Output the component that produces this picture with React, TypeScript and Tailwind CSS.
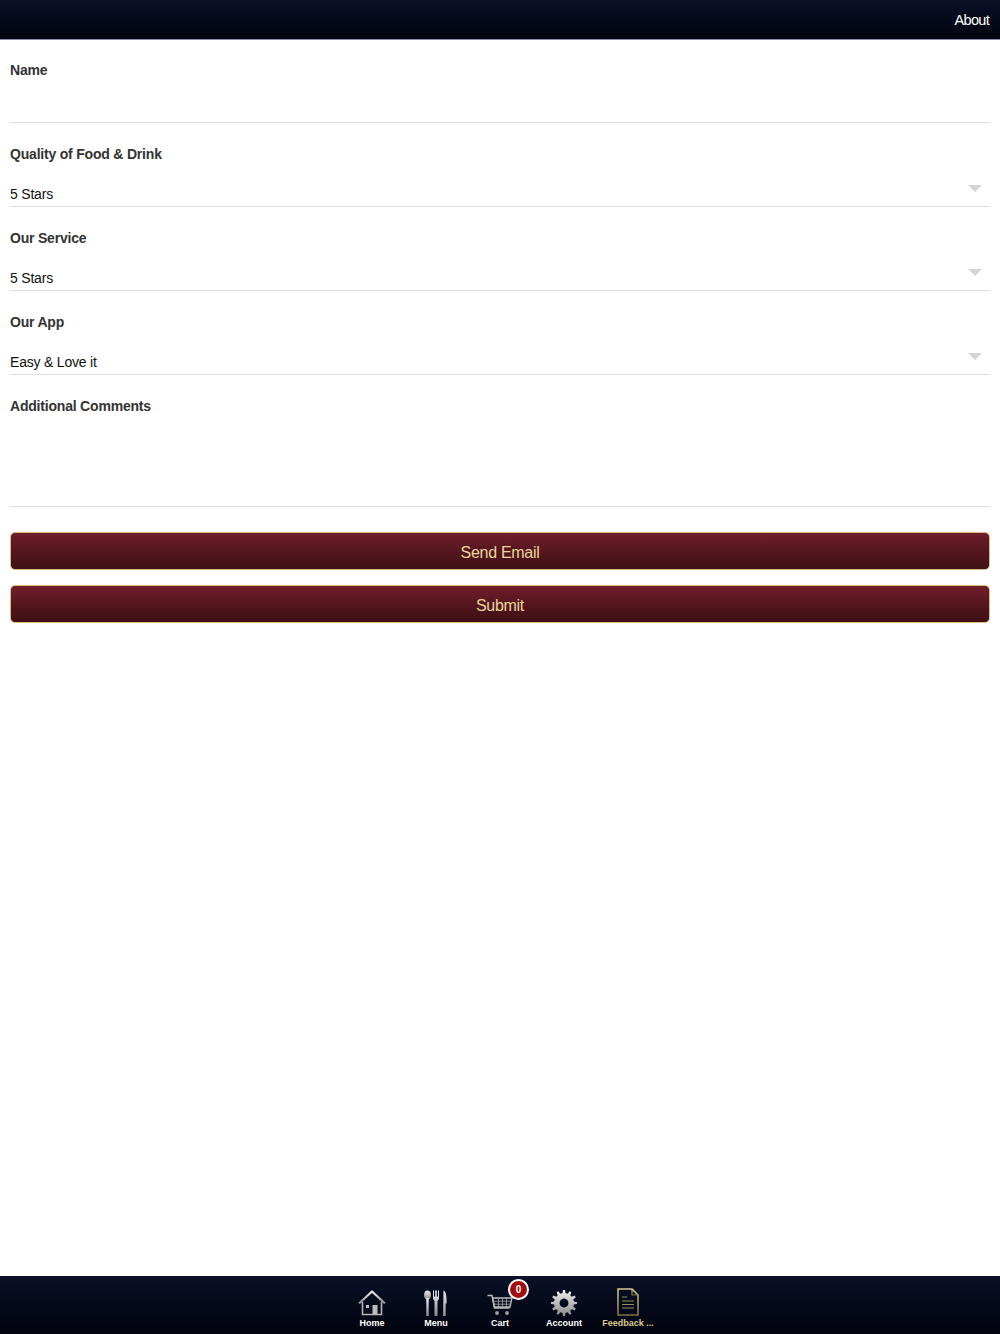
const fieldLabel = "text-[14px] leading-[18px] font-bold tracking-[-0.2px] text-[#333333]";

// tab icons share this grey fade
const IconDefs = () => (
  <svg width="0" height="0" className="absolute">
    <defs>
      <linearGradient id="tabGrey" x1="0" y1="0" x2="0" y2="1">
        <stop offset="0" stopColor="#eeeeee" />
        <stop offset="1" stopColor="#8a8a8a" />
      </linearGradient>
      <linearGradient id="tabGold" x1="0" y1="0" x2="0" y2="1">
        <stop offset="0" stopColor="#d9c78c" />
        <stop offset="1" stopColor="#7d6f45" />
      </linearGradient>
    </defs>
  </svg>
);

const HomeIcon = () => (
  <svg width="28" height="26" viewBox="0 0 28 26" fill="none">
    <path d="M1 13.5 14 1.5l13 12" stroke="url(#tabGrey)" strokeWidth="2.2" strokeLinejoin="round" />
    <path d="M4.5 12v12.5h19V12" stroke="#b5b5b5" strokeWidth="1.6" />
    <rect x="14.5" y="15" width="5" height="9.5" fill="#bcbcbc" />
    <rect x="8" y="15" width="3" height="3" fill="#bcbcbc" />
  </svg>
);

const MenuIcon = () => (
  <svg width="24" height="26" viewBox="0 0 24 26">
    <ellipse cx="3.5" cy="5" rx="3.4" ry="4.6" fill="url(#tabGrey)" />
    <rect x="2.3" y="8" width="2.4" height="18" fill="url(#tabGrey)" />
    <path d="M9 0.5h1v6h1.2v-6h1.6v6H14v-6h1V9l-1.5 2v15h-3V11L9 9z" fill="url(#tabGrey)" />
    <path d="M19.5 0.5c2.5 1 3.2 5 3.2 13h-1V26h-2.7z" fill="url(#tabGrey)" />
  </svg>
);

const CartIcon = () => (
  <svg width="26" height="22" viewBox="0 0 26 22" fill="none">
    <path d="M0.5 1.5h4.5l2.5 12.5h15" stroke="#bdbdbd" strokeWidth="1.4" />
    <path d="M5.5 4h19.5l-2 9H7.5z" stroke="#bdbdbd" strokeWidth="1.3" />
    <path d="M6.5 7.2h17.5M7 10.2h16.5M11.5 4.5V13.5M15.5 4.5V13.5M19.5 4.5V13.5" stroke="#a8a8a8" strokeWidth="0.8" />
    <circle cx="10" cy="19" r="1.9" fill="#a0a0a0" />
    <circle cx="20" cy="19" r="1.9" fill="#a0a0a0" />
  </svg>
);

const gearPath = () => {
  const teeth = 12;
  const pts: string[] = [];
  for (let i = 0; i < teeth; i++) {
    const a = (i / teeth) * Math.PI * 2;
    const step = (Math.PI * 2) / teeth;
    const corners: [number, number][] = [
      [a - step * 0.28, 10],
      [a - step * 0.16, 13],
      [a + step * 0.16, 13],
      [a + step * 0.28, 10],
    ];
    corners.forEach(([t, r]) => {
      pts.push(`${(13 + r * Math.sin(t)).toFixed(2)} ${(13 - r * Math.cos(t)).toFixed(2)}`);
    });
  }
  return `M${pts.join("L")}Z M13 8.6a4.4 4.4 0 1 0 0.01 0Z`;
};

const GearIcon = () => (
  <svg width="26" height="26" viewBox="0 0 26 26">
    <path d={gearPath()} fill="url(#tabGrey)" fillRule="evenodd" />
  </svg>
);

const DocIcon = () => (
  <svg width="22" height="28" viewBox="0 0 22 28" fill="none">
    <path d="M1 1h14l6 6v20H1z" stroke="url(#tabGold)" strokeWidth="1.6" />
    <path d="M15 1v6h6" stroke="url(#tabGold)" strokeWidth="1.2" />
    <path d="M5 9h5M5 13h12M5 16.5h12M5 20h12" stroke="#9a8c5a" strokeWidth="1.1" />
  </svg>
);

const tabs = [
  { label: "Home", icon: <HomeIcon /> },
  { label: "Menu", icon: <MenuIcon /> },
  { label: "Cart", icon: <CartIcon />, badge: "0" },
  { label: "Account", icon: <GearIcon /> },
  { label: "Feedback ...", icon: <DocIcon />, active: true },
];

const SelectField = ({ label, value }: { label: string; value: string }) => (
  <div className="h-[84px] border-b border-[#dddddd] pt-[22px] relative">
    <div className={fieldLabel}>{label}</div>
    <div className="mt-[22px] text-[14px] leading-[18px] tracking-[-0.2px] text-[#111111]">{value}</div>
    <div className="absolute right-[8px] top-[62px] w-0 h-0 border-l-[7px] border-r-[7px] border-t-[7px] border-l-transparent border-r-transparent border-t-[#d4d4d4]" />
  </div>
);

const GoldButton = ({ children }: { children: string }) => (
  <button className="block w-full h-[38px] pt-[3px] rounded-[5px] border border-[#d8bd80] bg-gradient-to-b from-[#701e2a] to-[#3d0f14] text-[16px] tracking-[-0.3px] text-[#e9d59c]">
    {children}
  </button>
);

export default function App() {
  return (
    <div className="h-[1334px] w-full flex flex-col bg-white font-['Liberation_Sans',Arial,sans-serif]">
      <IconDefs />
      <header className="h-[40px] shrink-0 flex items-center justify-end pt-[3px] pr-[11px] border-b border-[#8a8fa8] bg-gradient-to-b from-[#0a1128] to-[#02040e]">
        <span className="text-[14.5px] tracking-[-0.7px] text-white">About</span>
      </header>

      <main className="flex-1 px-[10px]">
        <div className="h-[83px] border-b border-[#dddddd] pt-[21px]">
          <div className={fieldLabel}>Name</div>
        </div>
        <SelectField label="Quality of Food & Drink" value="5 Stars" />
        <SelectField label="Our Service" value="5 Stars" />
        <SelectField label="Our App" value="Easy & Love it" />
        <div className="h-[132px] border-b border-[#dddddd] pt-[22px]">
          <div className={fieldLabel}>Additional Comments</div>
        </div>
        <div className="mt-[25px] flex flex-col gap-[15px]">
          <GoldButton>Send Email</GoldButton>
          <GoldButton>Submit</GoldButton>
        </div>
      </main>

      <nav className="h-[58px] shrink-0 flex justify-center bg-gradient-to-b from-[#0a1128] to-[#02040e]">
        {tabs.map((tab) => (
          <div key={tab.label} className="w-[64px] relative flex flex-col items-center">
            <div className="h-[41px] flex items-end justify-center pb-[1px]">{tab.icon}</div>
            <div
              className={
                tab.active
                  ? "text-[9px] leading-[12px] font-bold whitespace-nowrap text-[#dcc98c]"
                  : "text-[9px] leading-[12px] font-bold whitespace-nowrap text-white"
              }
            >
              {tab.label}
            </div>
            {tab.badge && (
              <span className="absolute left-[40px] top-[3px] w-[21px] h-[21px] rounded-full border-2 border-white bg-[#a30d0d] flex items-center justify-center text-[10px] font-bold text-white">
                {tab.badge}
              </span>
            )}
          </div>
        ))}
      </nav>
    </div>
  );
}
